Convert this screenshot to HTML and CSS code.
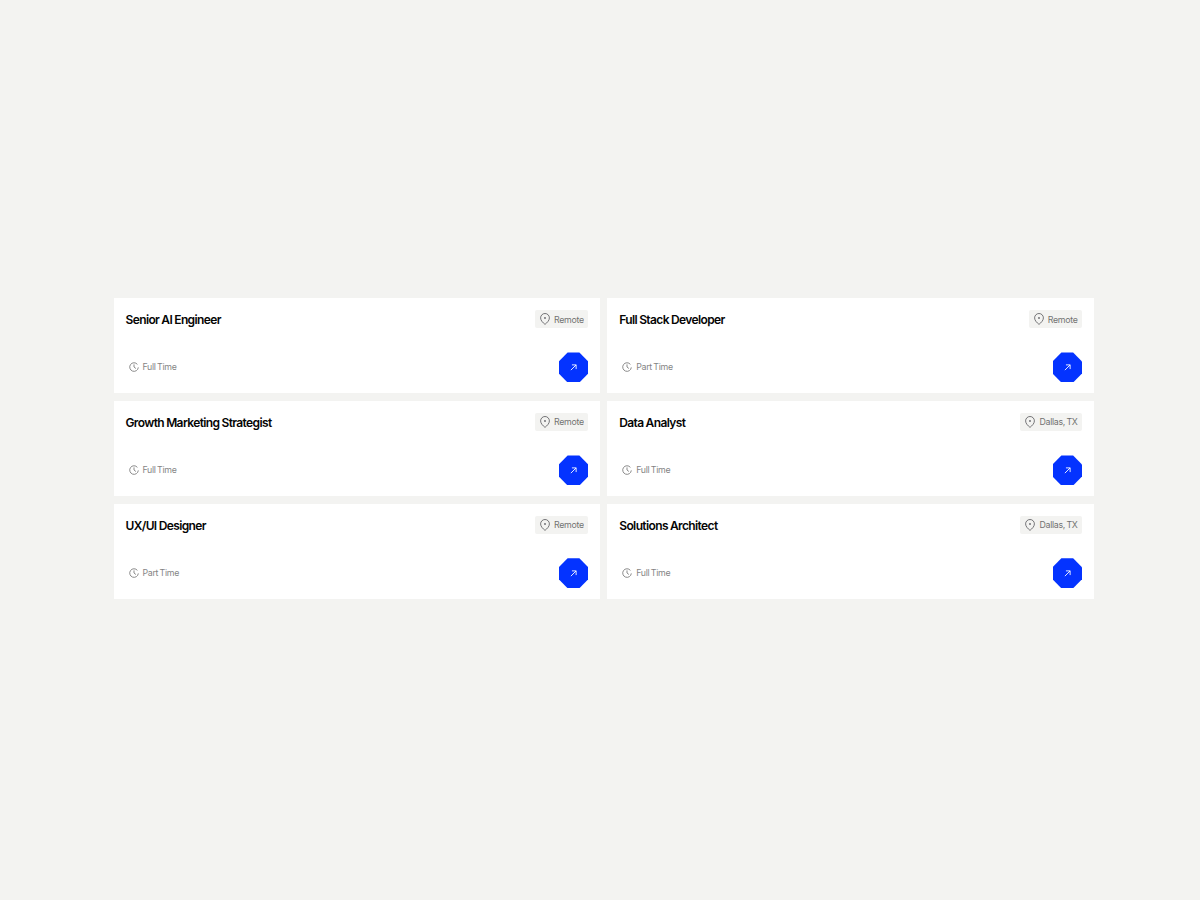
FILE: index.html
```html
<!DOCTYPE html>
<html lang="en">
<head>
<meta charset="utf-8">
<title>Open roles</title>
<link rel="stylesheet" href="styles.css">
</head>
<body>
<svg class="defs" width="0" height="0" aria-hidden="true">
  <symbol id="pin" viewBox="0 0 10 12"><path d="M5 11.4C2.8 9.6.6 7.4.6 4.9a4.4 4.4 0 0 1 8.8 0C9.4 7.4 7.2 9.6 5 11.4Z" fill="none" stroke="currentColor" stroke-width=".9"/><circle cx="5" cy="5" r=".9" fill="currentColor"/></symbol>
  <symbol id="clock" viewBox="0 0 10 10"><path d="M9.3 5.4A4.3 4.3 0 1 1 8.4 2.4" fill="none" stroke="currentColor" stroke-width=".9"/><path d="M5 2.4V5l1.9 1.5" fill="none" stroke="currentColor" stroke-width=".9"/></symbol>
  <symbol id="arrow" viewBox="0 0 8 8"><path d="M1 7 7 1M2.2 1H7v4.8" fill="none" stroke="currentColor" stroke-width="1"/></symbol>
</svg>
<main class="grid">
  <article class="card">
    <div class="row"><h2 class="title">Senior AI Engineer</h2><span class="tag"><svg class="pin"><use href="#pin"/></svg><span class="tag-text">Remote</span></span></div>
    <div class="row"><span class="meta"><svg class="clock"><use href="#clock"/></svg>Full Time</span><a class="go" href="#"><svg class="arrow"><use href="#arrow"/></svg></a></div>
  </article>
  <article class="card">
    <div class="row"><h2 class="title">Full Stack Developer</h2><span class="tag"><svg class="pin"><use href="#pin"/></svg><span class="tag-text">Remote</span></span></div>
    <div class="row"><span class="meta"><svg class="clock"><use href="#clock"/></svg>Part Time</span><a class="go" href="#"><svg class="arrow"><use href="#arrow"/></svg></a></div>
  </article>
  <article class="card">
    <div class="row"><h2 class="title">Growth Marketing Strategist</h2><span class="tag"><svg class="pin"><use href="#pin"/></svg><span class="tag-text">Remote</span></span></div>
    <div class="row"><span class="meta"><svg class="clock"><use href="#clock"/></svg>Full Time</span><a class="go" href="#"><svg class="arrow"><use href="#arrow"/></svg></a></div>
  </article>
  <article class="card">
    <div class="row"><h2 class="title">Data Analyst</h2><span class="tag"><svg class="pin"><use href="#pin"/></svg><span class="tag-text">Dallas, TX</span></span></div>
    <div class="row"><span class="meta"><svg class="clock"><use href="#clock"/></svg>Full Time</span><a class="go" href="#"><svg class="arrow"><use href="#arrow"/></svg></a></div>
  </article>
  <article class="card">
    <div class="row"><h2 class="title">UX/UI Designer</h2><span class="tag"><svg class="pin"><use href="#pin"/></svg><span class="tag-text">Remote</span></span></div>
    <div class="row"><span class="meta"><svg class="clock"><use href="#clock"/></svg>Part Time</span><a class="go" href="#"><svg class="arrow"><use href="#arrow"/></svg></a></div>
  </article>
  <article class="card">
    <div class="row"><h2 class="title">Solutions Architect</h2><span class="tag"><svg class="pin"><use href="#pin"/></svg><span class="tag-text">Dallas, TX</span></span></div>
    <div class="row"><span class="meta"><svg class="clock"><use href="#clock"/></svg>Full Time</span><a class="go" href="#"><svg class="arrow"><use href="#arrow"/></svg></a></div>
  </article>
</main>
</body>
</html>
```
FILE: styles.css
```css
* { box-sizing: border-box; }
html, body { margin: 0; height: 100%; }
body {
  background: #f3f3f1;
  font-family: Inter, "Liberation Sans", sans-serif;
  padding: 298px 106px 0 113.5px;
}
.defs { position: absolute; }
.grid {
  display: grid;
  grid-template-columns: 1fr 1fr;
  grid-auto-rows: 95.4px;
  column-gap: 7px;
  row-gap: 7.6px;
}
.card {
  background: #fff;
  padding: 12px 12px 11px 12px;
  display: flex;
  flex-direction: column;
  justify-content: space-between;
}
.row {
  display: flex;
  align-items: center;
  justify-content: space-between;
}
.title {
  margin: 0;
  padding-top: 1px;
  font-size: 12px;
  font-weight: 600;
  letter-spacing: -0.62px;
  word-spacing: -0.3px;
  color: #050505;
}
.tag {
  display: flex;
  align-items: center;
  gap: 4px;
  height: 18px;
  padding: 0 4.5px 0 5px;
  background: #f3f3f1;
  border-radius: 2px;
}
.tag-text {
  font-size: 8.8px;
  letter-spacing: -0.3px;
  word-spacing: -0.8px;
  color: #000;
  opacity: 0.55;
}
.pin { width: 10px; height: 12px; color: #66666a; }
.meta {
  display: flex;
  align-items: center;
  gap: 4px;
  margin: -1px 0 0 3px;
  font-size: 8.8px;
  letter-spacing: -0.3px;
  word-spacing: -0.8px;
  color: #000;
  opacity: 0.5;
}
.clock { width: 10px; height: 10px; }
.go {
  display: flex;
  align-items: center;
  justify-content: center;
  width: 29.5px;
  height: 30px;
  background: #0433ff;
  color: #fff;
  clip-path: polygon(30% 0, 70% 0, 100% 30%, 100% 70%, 70% 100%, 30% 100%, 0 70%, 0 30%);
}
.arrow { width: 7px; height: 7px; }
```
